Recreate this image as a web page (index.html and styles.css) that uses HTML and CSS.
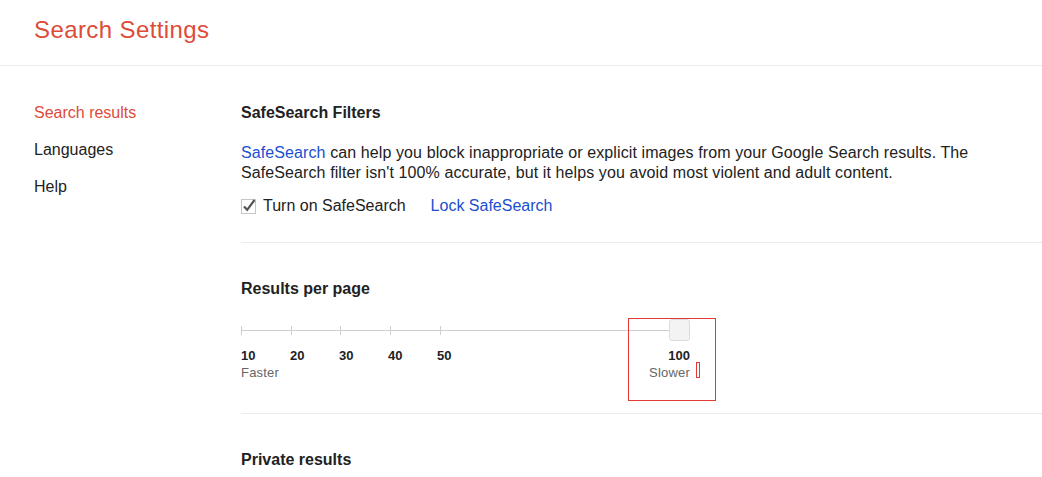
FILE: index.html
```html
<!DOCTYPE html>
<html lang="en">
<head>
    <meta charset="UTF-8">
    <meta name="viewport" content="width=device-width, initial-scale=1.0">
    <title>Search Settings</title>
    <link rel="stylesheet" href="styles.css">
</head>
<body>
    <!-- Header -->
    <div class="header">
        <h1>Search Settings</h1>
    </div>

    <div class="layout">
        <!-- Sidebar -->
        <div class="sidebar">
            <a href="#" class="active">Search results</a>
            <a href="#">Languages</a>
            <a href="#">Help</a>
        </div>

        <!-- Main Content -->
        <div class="main-content">
            <div class="section safesearch">
                <h2>SafeSearch Filters</h2>
                <p class="description"><a href="#">SafeSearch</a> can help you block inappropriate or explicit images from your Google Search results. The SafeSearch filter isn't 100% accurate, but it helps you avoid most violent and adult content.</p>
                <div class="check-row">
                    <label class="checkbox">
                        <svg width="16" height="16" viewBox="0 0 16 16">
                            <rect x="0.5" y="1.5" width="14" height="14" fill="#fff" stroke="#c6c6c6"/>
                            <path d="M3 8.5 L6.2 11.8 L13.5 2" fill="none" stroke="#555" stroke-width="2.2"/>
                        </svg>
                        Turn on SafeSearch
                    </label>
                    <a href="#">Lock SafeSearch</a>
                </div>
            </div>

            <div class="section results-per-page">
                <h2>Results per page</h2>
                <div class="slider">
                    <div class="track"></div>
                    <div class="ticks">
                        <span class="tick"></span>
                        <span class="tick"></span>
                        <span class="tick"></span>
                        <span class="tick"></span>
                        <span class="tick"></span>
                    </div>
                    <div class="thumb"></div>
                </div>
                <div class="slider-labels">
                    <div class="values">
                        <span>10</span>
                        <span>20</span>
                        <span>30</span>
                        <span>40</span>
                        <span>50</span>
                        <span class="last">100</span>
                    </div>
                    <div class="hints">
                        <span>Faster</span>
                        <span>Slower</span>
                    </div>
                </div>
                <div class="highlight"></div>
                <div class="caret"></div>
            </div>

            <div class="section private">
                <h2>Private results</h2>
            </div>
        </div>
    </div>
</body>
</html>
```

FILE: styles.css
```css
body {
    font-family: "Liberation Sans", Arial, sans-serif;
    margin: 0;
    padding: 0;
    background-color: white;
    color: #222;
    font-size: 16px;
}

a {
    text-decoration: none;
}

/* Header */
.header {
    padding: 16px 34px 21px;
    border-bottom: 1px solid #ebebeb;
}

.header h1 {
    margin: 0;
    font-size: 24px;
    font-weight: normal;
    line-height: 28px;
    letter-spacing: 0.4px;
    color: #dd4b39;
}

.layout {
    display: flex;
}

/* Sidebar */
.sidebar {
    width: 207px;
    padding: 28px 0 0 34px;
    display: flex;
    flex-direction: column;
}

.sidebar a {
    color: #222;
    line-height: 37px;
}

.sidebar a.active {
    color: #dd4b39;
}

/* Main Content */
.main-content {
    flex-grow: 1;
    padding-top: 37px;
}

.section {
    border-bottom: 1px solid #ebebeb;
    position: relative;
}

.section h2 {
    margin: 0;
    font-size: 16px;
    font-weight: bold;
    line-height: 20px;
    color: #222;
}

.safesearch {
    padding-bottom: 26px;
}

.description {
    margin: 20px 0 0;
    max-width: 760px;
    line-height: 20px;
    letter-spacing: 0.1px;
}

.description a,
.check-row a {
    color: #1a4fd1;
}

.check-row {
    display: flex;
    align-items: center;
    gap: 25px;
    margin-top: 13px;
    line-height: 20px;
}

.checkbox {
    display: flex;
    align-items: center;
    gap: 6px;
}

.checkbox svg {
    display: block;
}

.results-per-page {
    padding: 36px 0 32px;
}

.slider {
    position: relative;
    width: 449px;
    height: 22px;
    margin-top: 20px;
}

.track {
    position: absolute;
    left: 0;
    right: 20px;
    top: 11px;
    height: 1px;
    background-color: #cfcfcf;
}

.ticks {
    display: flex;
    padding-top: 7px;
}

.tick {
    width: 49.7px;
    height: 9px;
    border-left: 1px solid #cfcfcf;
    box-sizing: border-box;
}

.thumb {
    position: absolute;
    right: 0;
    top: 0;
    width: 19px;
    height: 20px;
    background-color: #f3f3f3;
    border: 1px solid #dcdcdc;
    border-radius: 3px;
}

.slider-labels {
    width: 449px;
    margin-top: 7px;
}

.values {
    display: flex;
    font-size: 13px;
    font-weight: bold;
    line-height: 16px;
    color: #222;
}

.values span {
    width: 49px;
}

.values .last {
    width: auto;
    margin-left: auto;
}

.hints {
    display: flex;
    justify-content: space-between;
    padding-top: 1px;
    font-size: 13px;
    line-height: 16px;
    letter-spacing: 0.2px;
    color: #666;
}

/* Red annotation box */
.highlight {
    position: absolute;
    left: 387px;
    top: 75px;
    width: 86px;
    height: 81px;
    border: 1px solid #e53935;
}

.caret {
    position: absolute;
    left: 455px;
    top: 119px;
    width: 2px;
    height: 14px;
    border: 1px solid #e53935;
}

.private {
    border-bottom: none;
    padding-top: 36px;
}
```
